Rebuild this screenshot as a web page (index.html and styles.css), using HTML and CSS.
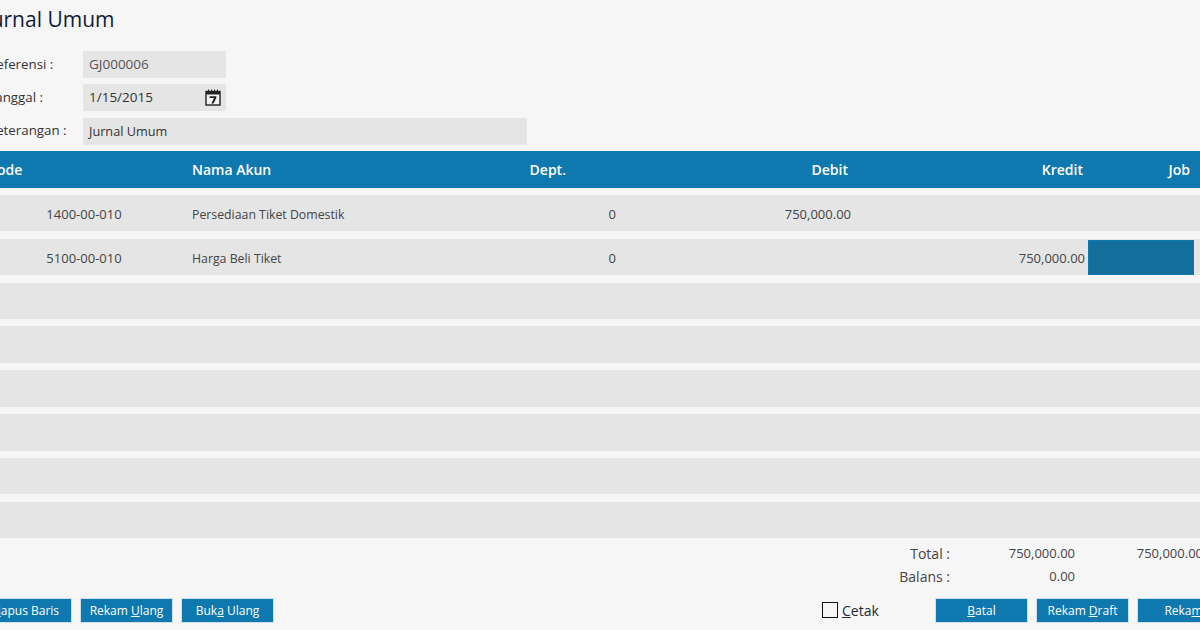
FILE: index.html
```html
<!DOCTYPE html>
<html lang="id">
<head>
  <meta charset="UTF-8" />
  <title>Jurnal Umum</title>
  <link rel="stylesheet" href="styles.css">
</head>
<body>
  <div class="page">
    <h1 class="title">Jurnal Umum</h1>

    <div class="form">
      <div class="form-row">
        <label class="form-label">Referensi :</label>
        <div class="input input-short muted">GJ000006</div>
      </div>
      <div class="form-row">
        <label class="form-label">Tanggal :</label>
        <div class="input input-short date">
          <span>1/15/2015</span>
          <svg class="cal" width="16" height="17" viewBox="0 0 16 17">
            <rect x="1" y="2.5" width="14" height="13.5" fill="#f4f4f4" stroke="#222" stroke-width="1.4"/>
            <rect x="1" y="2" width="14" height="3.5" fill="#222"/>
            <path d="M3.5 0.5v2M6.5 0.5v2M9.5 0.5v2M12.5 0.5v2" stroke="#222" stroke-width="1"/>
            <path d="M4.6 7.2h6.8v1.6L8.6 14.4H6.4L9 9H4.6z" fill="#222"/>
          </svg>
        </div>
      </div>
      <div class="form-row">
        <label class="form-label">Keterangan :</label>
        <div class="input input-long">Jurnal Umum</div>
      </div>
    </div>

    <div class="grid-head">
      <div>Kode</div>
      <div>Nama Akun</div>
      <div class="right">Dept.</div>
      <div class="right">Debit</div>
      <div class="right">Kredit</div>
      <div class="right">Job</div>
    </div>

    <div class="rows">
      <div class="row">
        <div class="code num">1400-00-010</div>
        <div>Persediaan Tiket Domestik</div>
        <div class="right num">0</div>
        <div class="right num">750,000.00</div>
        <div></div>
        <div></div>
      </div>
      <div class="row">
        <div class="code num">5100-00-010</div>
        <div>Harga Beli Tiket</div>
        <div class="right num">0</div>
        <div></div>
        <div class="right num">750,000.00</div>
        <div class="job-active"></div>
      </div>
      <div class="row"></div>
      <div class="row"></div>
      <div class="row"></div>
      <div class="row"></div>
      <div class="row"></div>
      <div class="row"></div>
    </div>

    <div class="totals">
      <div class="total-row">
        <span class="total-label">Total :</span>
        <span class="total-num num">750,000.00</span>
        <span class="total-num2 num">750,000.00</span>
      </div>
      <div class="total-row">
        <span class="total-label">Balans :</span>
        <span class="total-num num">0.00</span>
      </div>
    </div>

    <div class="actions">
      <div class="btn-group btn-group-left">
        <button class="btn"><u>H</u>apus Baris</button>
        <button class="btn">Rekam <u>U</u>lang</button>
        <button class="btn">Buk<u>a</u> Ulang</button>
      </div>
      <div class="check">
        <span class="check-box"></span>
        <span><u>C</u>etak</span>
      </div>
      <div class="btn-group">
        <button class="btn"><u>B</u>atal</button>
        <button class="btn">Rekam <u>D</u>raft</button>
        <button class="btn">Reka<u>m</u></button>
      </div>
    </div>
  </div>
</body>
</html>
```

FILE: styles.css
```css
html, body {
  margin: 0;
  padding: 0;
  height: 630px;
  overflow: hidden;
  background: #f6f6f6;
}
body {
  font-family: "Open Sans", "Noto Sans", sans-serif;
  font-size: 12.3px;
  color: #444;
}
.page {
  width: 1260px;
  margin-left: -12px;
}
.title {
  margin: 0 0 0 -3px;
  padding-top: 5px;
  height: 51px;
  box-sizing: border-box;
  font-size: 21px;
  line-height: 28px;
  font-weight: 400;
  color: #111c33;
}
.form-row {
  display: flex;
  align-items: center;
  height: 27px;
  margin-bottom: 6.3px;
}
.form-label {
  width: 95px;
  font-size: 13.3px;
  color: #333;
  position: relative;
  top: -1px;
}
.input {
  height: 27px;
  line-height: 27px;
  background: #e5e5e5;
  padding: 0 6px;
  box-sizing: border-box;
  font-size: 12.7px;
  color: #333;
}
.input-short {
  width: 143px;
  font-size: 13.5px;
}
.input-long { width: 444px; }
.muted { color: #555; }
.date {
  display: flex;
  justify-content: space-between;
  align-items: center;
  padding-right: 5px;
}
.cal { display: block; }
.grid-head {
  display: grid;
  grid-template-columns: 204px 274px 100px 282px 235px 107px;
  height: 37px;
  line-height: 37px;
  margin-top: 2px;
  padding-right: 70px;
  background: #0f78ae;
  color: #fff;
  font-size: 14px;
  font-weight: 600;
}
.right { text-align: right; }
.num { font-size: 13px; }
.rows { padding-top: 7px; }
.row {
  display: grid;
  grid-template-columns: 204px 324px 100px 235px 234px 109px;
  grid-auto-rows: 36.5px;
  height: 36.5px;
  line-height: 39px;
  margin-bottom: 7.35px;
  background: #e5e5e5;
}
.code {
  text-align: center;
  padding-right: 12px;
}
.job-active {
  margin: 1px 0 0 3px;
  width: 106px;
  height: 35px;
  background: #156f9d;
  box-sizing: border-box;
  border: 1px solid #0f78ae;
}
.totals {
  margin-top: -4px;
  height: 56px;
}
.total-row {
  display: flex;
  height: 23px;
  line-height: 23px;
}
.total-label {
  width: 962px;
  text-align: right;
  font-size: 14px;
}
.total-num {
  width: 125px;
  text-align: right;
}
.total-num2 {
  width: 128px;
  text-align: right;
}
.actions {
  display: flex;
  align-items: center;
  height: 25px;
}
.btn-group {
  display: flex;
  gap: 8px;
}
.btn-group-left { margin-left: -9px; }
.btn {
  width: 93px;
  height: 25px;
  padding: 0;
  border: 1px solid #cfe0ea;
  background: #0f78ae;
  color: #fff;
  font-family: inherit;
  font-size: 12px;
}
.check {
  display: flex;
  align-items: center;
  gap: 4px;
  margin-left: 548px;
  width: 113px;
  font-size: 14px;
  color: #1d2a3a;
}
.check-box {
  width: 14px;
  height: 14px;
  border: 1.5px solid #111;
  background: #f6f6f6;
}
```
